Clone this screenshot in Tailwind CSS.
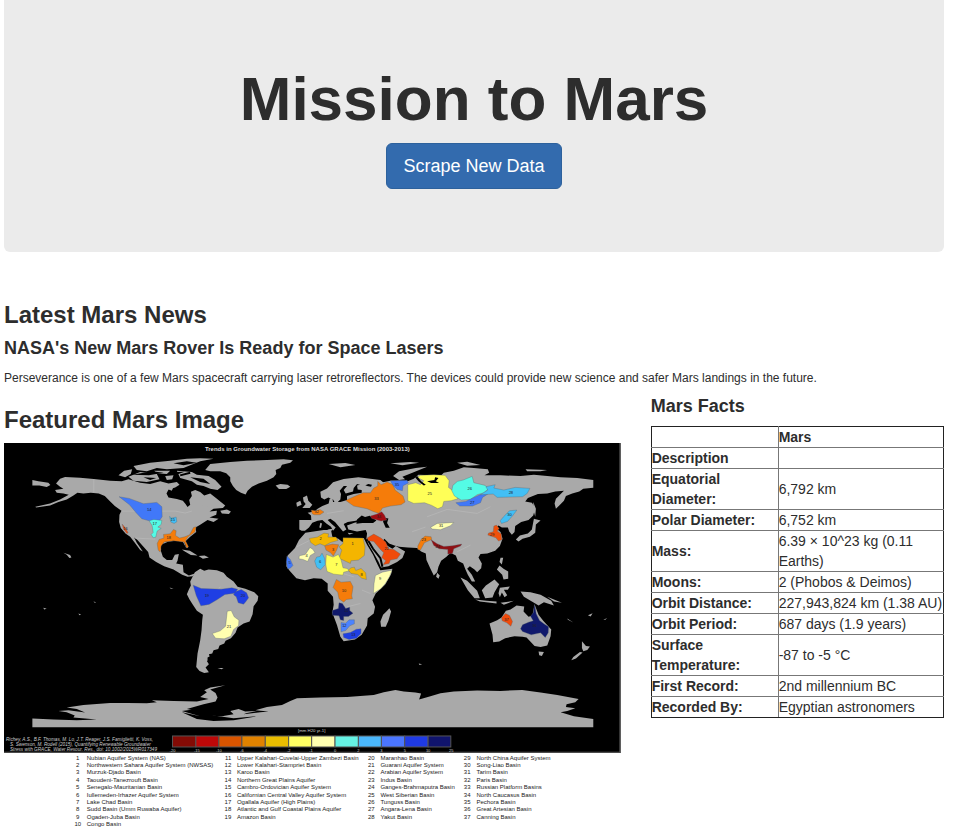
<!DOCTYPE html>
<html lang="en">
<head>
<meta charset="utf-8">
<meta name="viewport" content="width=device-width, initial-scale=1">
<title>Mission to Mars</title>
<script src="https://cdn.jsdelivr.net/npm/@tailwindcss/browser@4"></script>
</head>
<body class="bg-white overflow-x-hidden font-['Liberation_Sans',Arial,sans-serif] text-sm leading-5 text-[#2d2d2d]">
<div class="pl-1 pr-[18px]">
  <header class="flex flex-col items-center gap-2 rounded-b-md bg-[#ebebeb] py-[63px]">
    <h1 class="text-[62px] leading-[72px] text-center font-bold">Mission to Mars</h1>
    <button type="button" class="rounded-md border border-[#2d619c] bg-[#336bae] px-4 py-[10px] text-lg leading-6 text-white">Scrape New Data</button>
  </header>

  <section class="mt-[49px]">
    <h2 class="text-2xl leading-7 font-bold">Latest Mars News</h2>
    <h3 class="mt-[9px] text-lg leading-5 font-bold">NASA's New Mars Rover Is Ready for Space Lasers</h3>
    <p class="mt-[10px] text-xs leading-5">Perseverance is one of a few Mars spacecraft carrying laser retroreflectors. The devices could provide new science and safer Mars landings in the future.</p>
  </section>

  <div class="-mx-[15px] flex">
    <section class="w-2/3 px-[15px] pt-[18px]">
      <h2 class="mb-[9px] text-2xl leading-7 font-bold">Featured Mars Image</h2>
      <svg class="block w-full h-auto" viewBox="12 9 1848 1170" role="img" aria-label="Trends in Groundwater Storage world map" font-family="Liberation Sans, Arial, sans-serif">
        <rect x="12" y="9" width="1848" height="929" fill="#000"/>
        <path d="M1858 9V936H12" fill="none" stroke="#666" stroke-width="3"/>
        <g fill="#a9a9a9">
          <!-- North America -->
          <path d="M97 120L115 124 145 128 151 135 140 141 118 136 97 136Z"/>
          <path d="M165 150L190 146 180 140 168 130 180 116 195 111 240 113 281 117 330 122 365 124 385 118 420 128 450 132 480 124 505 130 530 126 538 134 525 142 505 148 499 160 505 172 530 177 548 182 556 192 562 201 570 194 567 180 575 168 572 155 585 150 600 156 612 166 630 160 650 176 675 196 668 204 640 206 628 214 650 212 648 224 628 232 655 236 640 246 622 240 600 254 586 262 588 276 570 290 555 304 564 322 558 324 548 305 530 302 505 304 488 312 482 332 488 350 500 360 516 360 524 344 536 342 532 362 528 370 548 374 550 396 566 406 584 400 578 408 562 410 546 404 520 388 492 378 468 366 448 352 444 336 428 318 412 300 402 292 410 308 428 334 420 330 404 308 390 290 376 280 362 264 357 246 358 224 364 212 344 198 328 182 314 168 296 160 272 158 250 160 232 158 220 166 200 178 175 186 150 196 108 202 106 200 150 190 180 178 206 164 190 160 170 158Z"/>
          <path d="M600 190L615 186 630 198 615 200ZM660 212L680 208 692 214 686 222 665 220Z"/>
          <!-- Arctic islands and Greenland -->
          <path d="M355 106L372 92 396 88 392 102 375 112ZM385 110L420 96 470 102 478 118 440 126 400 122ZM400 78L450 68 510 62 560 56 600 55 640 56 600 64 570 76 550 84 500 88 470 84 440 94 410 90ZM462 92L510 92 500 102 470 100ZM530 92L575 96 590 104 625 108 645 120 664 140 652 150 630 146 610 138 590 134 575 124 540 114ZM495 108L520 106 516 118 500 120ZM500 146L520 140 515 152Z"/>
          <path d="M630 72L690 66 740 62 800 60 850 58 878 61 870 68 845 74 840 84 826 90 828 102 820 112 800 122 775 130 755 140 742 152 736 163 722 158 708 150 698 138 690 124 690 112 678 100 660 94 630 94 615 90Z"/>
          <path d="M826 136L840 132 862 134 870 140 858 147 836 147ZM545 328L569 332 592 346 572 345 554 334ZM595 348L613 346 626 352 608 356ZM190 338L210 345 214 352 208 354 200 344ZM652 683L670 683 664 687ZM508 442L520 446 512 446Z"/>
          <!-- South America -->
          <path d="M584 396L600 386 612 392 625 388 650 390 670 398 680 410 700 424 712 440 735 446 762 456 774 468 772 482 760 498 757 522 748 544 730 550 712 562 706 578 692 594 676 602 672 610 658 616 654 626 640 630 636 640 626 642 630 654 620 662 626 672 616 682 626 696 612 698 598 692 588 680 590 660 592 640 596 620 600 600 604 570 606 540 608 524 590 512 578 494 568 478 560 462 566 448 572 436 570 424Z"/>
          <!-- Europe and Asia -->
          <path d="M897 268V240L933 240 932 226 922 218 942 214 952 206 966 198 985 190 988 176 996 172 998 186 1020 186 1040 180 1040 168 1060 162 1084 158 1084 150 1072 148 1070 136 1088 132 1100 138 1112 140 1116 130 1140 128 1170 122 1200 122 1222 124 1240 116 1254 104 1290 106 1320 108 1330 98 1360 92 1390 82 1420 84 1462 88 1466 98 1452 106 1500 106 1560 108 1600 104 1640 108 1680 112 1730 114 1778 120V143L1748 146 1736 154 1715 160 1696 168 1690 182 1676 196 1666 206 1662 190 1666 176 1678 164 1690 152 1664 154 1640 160 1612 162 1582 174 1574 184 1594 188 1604 204 1598 226 1584 240 1562 246 1544 258 1542 276 1534 284 1526 274 1522 262 1504 262 1494 256 1486 264 1500 276 1506 296 1498 318 1484 332 1460 340 1440 342 1434 352 1444 370 1442 384 1430 396 1422 388 1408 378 1400 386 1414 404 1424 424 1414 424 1402 404 1394 386 1388 370 1372 362 1366 346 1350 338 1338 350 1322 362 1314 380 1310 396 1300 406 1290 386 1278 360 1276 340 1262 334 1250 324 1222 322 1196 320 1182 316 1166 310 1152 296 1148 302 1162 318 1176 326 1186 318 1214 334 1206 354 1190 366 1164 378 1142 382 1134 364 1118 336 1104 312 1098 296 1100 280 1096 270 1070 274 1044 268 1040 256 1062 248 1078 244 1090 246 1082 236 1066 242 1042 246 1030 252 1038 268 1028 274 1016 260 1004 246 990 236 982 240 994 252 1006 262 998 272 992 260 978 250 966 240 952 242 936 248 926 262 914 272 904 272Z"/>
          <path d="M960 155L980 145 998 127 1030 117 1074 112 1110 116 1140 120 1150 128 1124 136 1104 132 1090 138 1070 132 1060 144 1058 154 1036 160 1030 150 1040 138 1030 138 1018 152 1022 162 1020 178 1006 192 998 178 984 172 972 178 962 172ZM908 172L920 166 924 182 936 194 928 204 906 204 916 192 910 184ZM888 188L900 182 904 194 890 200ZM1178 108L1196 94 1246 84 1280 80 1236 98 1206 110 1214 118 1196 120ZM985 72L1035 69 1065 75 1020 82ZM1170 70L1230 66 1256 68 1206 76ZM1370 68L1400 65 1440 75 1400 77ZM1575 88L1640 90 1620 94 1580 94ZM980 268L998 266 994 272ZM960 248L965 250 962 264 957 262ZM1042 278L1060 280 1046 283Z"/>
          <path d="M1600 236L1620 241 1606 253 1604 278 1588 290 1566 296 1554 304 1546 298 1558 286 1582 280 1594 268ZM1598 186L1606 206 1604 230 1598 208ZM1500 353L1508 353 1504 373 1497 366ZM1497 376L1509 386 1523 394V416L1509 418 1505 404 1489 388ZM1310 398L1318 406 1314 416 1307 410ZM1380 412L1400 422 1430 452 1438 474 1422 474 1402 450ZM1424 478L1458 482 1488 484V490L1438 484ZM1444 450L1456 436 1482 418 1496 432 1482 456 1476 472 1454 474ZM1498 443L1528 439 1522 449 1510 449 1520 465 1512 471 1504 457 1498 471 1494 459ZM1560 454L1590 456 1620 464 1652 482 1660 496 1630 486 1614 496 1594 484 1570 470ZM1500 488L1540 482 1510 494Z"/>
          <!-- Africa -->
          <path d="M915 278L940 274 970 270 992 270 996 290 1014 296 1026 306 1036 294 1064 298 1090 294 1100 314 1118 344 1130 370 1140 390 1176 386 1172 402 1154 434 1126 460 1116 480 1124 500 1120 520 1102 534 1100 556 1084 584 1064 598 1030 603 1020 590 1010 555 996 518 1000 494 998 470 982 452 982 430 964 416 940 414 914 420 888 414 868 392 858 378 862 346 884 324 896 300Z"/>
          <path d="M1167 504L1172 514 1164 542 1156 560 1142 560 1140 544 1148 524 1158 514Z"/>
          <!-- Australia and New Zealand -->
          <path d="M1467 550L1490 540 1503 532 1516 512 1530 508 1548 496 1571 499 1569 514 1584 530 1596 526 1602 493 1614 524 1628 542 1652 568 1650 588 1640 616 1620 620 1602 617 1578 592 1566 590 1542 588 1514 594 1496 604 1478 606 1476 584ZM1614 634L1630 635 1624 647 1616 645ZM1744 603L1756 617 1768 619 1760 629 1748 633 1744 623ZM1738 635L1746 637 1726 655 1712 660 1718 650ZM1640 470L1684 488 1660 484ZM1762 525L1776 519 1770 529ZM1700 535L1718 547 1702 539Z"/>
          <!-- Antarctica -->
          <path d="M97 835L160 838 230 840 290 838 220 832 224 826 200 816 175 812 205 810 255 817 230 806 200 802 250 794 330 788 380 788 440 789 470 786 455 780 520 782 590 784 625 776 600 770 620 756 612 750 630 742 675 735 630 748 646 758 652 772 646 784 610 792 560 806 590 812 620 826 665 828 700 822 690 812 715 806 735 814 770 812 740 818 730 822 780 816 805 814 765 810 800 800 845 794 870 782 890 774 960 772 1040 770 1100 766 1120 764 1150 756 1185 749 1210 754 1245 757 1262 760 1256 778 1290 768 1320 759 1360 754 1430 751 1500 752 1565 749 1620 757 1670 764 1734 776 1724 786 1698 792 1696 800 1724 804 1700 812 1680 816 1720 828 1778 836V861H97Z"/>
          <path d="M130 503L140 506 132 508ZM235 520L243 523 238 525ZM280 484L288 486 284 488ZM1808 538L1820 534 1814 539ZM1255 670L1265 672 1257 674Z"/>
        </g>
        <!-- seas, lakes and channels -->
        <path d="M1070 238L1084 226 1094 231 1108 227 1128 241 1118 249 1086 249 1068 251ZM1150 233L1164 235 1160 249 1168 263 1156 263 1148 245ZM396 104L456 94 490 98 446 106ZM520 70L560 64 590 68 550 76ZM430 112L468 114 450 120ZM505 97L553 95 535 102ZM570 112L610 116 630 132 600 126ZM545 812L590 806 640 826 700 834 770 828 700 840 640 842 590 836 545 816 600 828ZM622 652L634 646V660L622 660ZM560 330L550 300 520 302 490 305 486 334 480 320 484 300 510 296 540 298 556 308Z" fill="#000"/>
        <path d="M540 106l30 -8M610 818l-30 -4M1100 296L1118 326 1140 354 1146 380" fill="none" stroke="#000" stroke-width="6"/>
        <!-- faint borders -->
        <path d="M281 118v38M365 213h160l30 6 20-6M405 294l60 3M1280 230l60-22 90 12 40-20M1370 335l40-20M1235 275l40-14M930 300l-40 20M1010 395l50 15M1040 500l40-10M1085 450l25 10M660 440l-40 60M980 220l50-8" fill="none" stroke="#b9b9b9" stroke-width="2"/>
        <!-- aquifers -->
        <g stroke="#55606a" stroke-width="1">
          <path fill="#4178f8" d="M357 170L387 175 430 191 470 187 485 200 486 230 478 241 450 243 425 236 408 218 388 194Z"/>
          <path fill="#54fbe5" d="M447 242L461 238 485 241 483 253 473 261 483 265 471 273 467 291 459 293 453 283 459 277 456 257Z"/>
          <path fill="#42bff5" d="M508 229L514 234 528 231 530 245 522 250 512 246Z"/>
          <path fill="#ef5317" d="M366 252L376 264 384 278 380 280 370 266Z"/>
          <path fill="#f57c0a" d="M490 283L510 281 520 268 528 272 526 286 538 294 554 290 568 284 580 262 588 260 584 276 564 290 556 302 565 320 560 324 552 306 520 302 492 306 483 318 480 336 474 330 471 310 477 298 491 294Z"/>
          <path fill="#1f3fe4" d="M579 435L603 445 663 447 695 443 712 447 704 459 674 463 650 479 626 493 602 497 588 466Z"/>
          <path fill="#1f3fe4" d="M705 455L723 448 739 458 745 473 737 484 730 492 714 488 708 470 700 464Z"/>
          <path fill="#ffffb0" d="M681 513L693 511 702 530 716 540 715 556 700 568 692 588 672 596 646 594 636 580 660 572 676 558Z"/>
          <path fill="#f4b500" d="M927 295L951 291 971 279 985 281 983 291 1007 291 1013 301 991 307 973 317 959 311 945 317 931 307Z"/>
          <path fill="#f4b500" d="M1028 293L1088 294 1094 320 1092 346 1074 360 1052 362 1050 370 1024 358 1016 356 1024 330 1016 320 1028 310Z"/>
          <path fill="#f57c0a" d="M973 317L997 312 1015 314 1009 330 999 348 991 338 977 330Z"/>
          <path fill="#ffffb0" d="M897 347L915 343 929 322 938 328 944 338 930 346 922 364 908 358 896 356Z"/>
          <path fill="#4178f8" d="M860 348L870 358 878 376 870 384 862 386 858 366Z"/>
          <path fill="#42bff5" d="M949 351L959 349 965 339 973 355 975 373 961 389 949 381 943 363Z"/>
          <path fill="#ffff57" d="M978 343L998 351 1014 343 1022 359 1028 383 1040 385 1048 392 1030 396 1028 405 1000 402 980 394 976 372Z"/>
          <path fill="#f4b500" d="M1052 383L1062 381 1066 391 1082 385 1096 398 1098 418 1084 414 1072 403 1052 400 1044 390Z"/>
          <path fill="#ffffb0" d="M1175 390L1167 410 1155 430 1141 446 1119 460 1121 430 1125 406 1146 396Z"/>
          <path fill="#f57c0a" d="M1008 418L1022 426 1050 424 1058 440 1054 466 1056 476 1038 478 1030 486 1016 476 1012 456 998 442Z"/>
          <path fill="#10196c" d="M1016 488L1026 490 1036 505 1048 501V511L1058 519 1044 529H1030V541L1020 539 1016 527 996 525V511L1014 505Z"/>
          <path fill="#4b83ff" d="M1022 547L1036 549 1046 539 1062 539V551L1048 557 1036 571 1022 575Z"/>
          <path fill="#1f3fe4" d="M1028 581L1050 577 1068 567 1082 566V580L1068 594 1046 598 1030 592Z"/>
          <path fill="#f57c0a" d="M933 210L945 212 959 208 971 216 959 224 941 224 935 220Z"/>
          <path fill="#f57c0a" d="M1036 181L1060 170 1088 158 1110 158 1120 144 1132 138 1132 124 1142 134 1160 126 1178 134 1184 150 1208 168 1214 186 1202 194 1170 198 1146 204 1136 220 1118 214 1100 206 1060 198Z"/>
          <path fill="#a20c12" d="M1110 228L1130 222 1144 215 1152 225 1159 240 1142 243 1114 235Z"/>
          <path fill="#4178f8" d="M1170 122L1220 121 1224 129 1208 137 1206 152 1190 148 1178 136Z"/>
          <path fill="#ffff57" d="M1222 134L1246 128 1260 134 1270 122 1250 112 1260 106 1300 104 1334 106 1346 122 1344 142 1362 156 1372 176 1352 182 1330 184 1326 200 1312 206 1294 196 1272 188 1240 190 1222 182Z"/>
          <path fill="#54fbe5" d="M1357 136L1371 124 1388 120 1415 109 1420 128 1454 136 1464 146 1450 158 1430 164 1410 178 1382 180 1362 168 1354 152Z"/>
          <path fill="#4178f8" d="M1366 188L1396 184 1412 176 1438 164 1462 162 1446 172 1440 188 1416 198 1378 198Z"/>
          <path fill="#42bff5" d="M1456 140L1484 134 1480 144 1510 150 1544 142 1588 145 1580 160 1566 170 1490 172 1478 162 1440 164 1462 150Z"/>
          <path fill="#42bff5" d="M1499 242L1509 230 1527 212 1549 210 1537 226 1521 244 1503 250Z"/>
          <path fill="#ffffb0" d="M1290 262L1310 250 1360 247 1350 257 1320 269 1296 267Z"/>
          <path fill="#f0500b" d="M1480 258L1488 255 1496 265 1490 273 1502 281 1504 299 1494 303 1486 293 1462 285 1464 279 1478 275Z"/>
          <path fill="#f57c0a" d="M1252 318L1262 298 1274 288 1292 290 1294 298 1272 308 1260 330 1252 328Z"/>
          <path fill="#8f0f13" d="M1292 299L1310 311 1330 319 1356 317 1384 312 1380 318 1360 326 1356 340 1342 342V328L1316 326 1300 316Z"/>
          <path fill="#f04b0b" d="M1100 294L1120 282 1142 294 1156 306 1164 326 1180 328 1200 342 1190 356 1170 360 1166 370 1148 374 1156 362 1144 352 1150 338 1140 328 1120 304 1104 302Z"/>
          <path fill="#f04b0b" d="M1503 533L1515 520 1527 526 1536 544 1531 558 1519 548 1505 542Z"/>
          <path fill="#10196c" d="M1602 493L1607 521 1617 541 1632 552 1644 560 1643 578 1634 592 1620 578 1592 584 1566 574 1560 566 1566 554 1584 546 1598 542 1590 528 1598 518Z"/>
        </g>
        <path d="M1250 108L1262 124 1276 134 1270 136 1254 124 1244 112ZM1280 124L1302 120 1304 112 1314 114 1306 124 1316 129 1292 129Z" fill="#000"/>
        <g font-size="12" fill="#222" text-anchor="middle">
          <text x="447" y="212">14</text><text x="464" y="254">17</text><text x="518" y="243">15</text><text x="506" y="298">18</text><text x="376" y="270">16</text>
          <text x="620" y="471">19</text><text x="728" y="471">20</text><text x="686" y="563">21</text><text x="961" y="299">2</text><text x="1057" y="315">1</text><text x="998" y="333">3</text>
          <text x="919" y="352">4</text><text x="868" y="372">5</text><text x="959" y="370">6</text><text x="1008" y="378">7</text><text x="1084" y="407">8</text><text x="1139" y="421">9</text>
          <text x="1031" y="455">10</text><text x="1038" y="516">11</text><text x="1032" y="560">12</text><text x="1059" y="588">13</text><text x="949" y="219">32</text><text x="1128" y="181">33</text>
          <text x="1136" y="234">34</text><text x="1190" y="138">35</text><text x="1288" y="166">25</text><text x="1408" y="151">26</text><text x="1415" y="192">27</text><text x="1531" y="163">28</text>
          <text x="1527" y="229">30</text><text x="1322" y="262">31</text><text x="1475" y="289">29</text><text x="1270" y="303">23</text><text x="1312" y="323">24</text><text x="1159" y="330">22</text>
          <text x="1518" y="542">37</text><text x="1602" y="560">36</text>
        </g>
        <text x="921" y="33" font-size="18" font-weight="bold" fill="#ddd" text-anchor="middle">Trends in Groundwater Storage from NASA GRACE Mission (2003-2013)</text>
        <g font-size="14" font-style="italic" fill="#ccc">
          <text x="18" y="901">Richey, A.S., B.F. Thomas, M. Lo, J.T. Reager, J.S. Famiglietti, K. Voss,</text>
          <text x="30" y="916">S. Swenson, M. Rodell (2015), Quantifying Renewable Groundwater</text>
          <text x="30" y="931">Stress with GRACE, Water Resour. Res., doi: 10.1002/2015WR017349</text>
        </g>
        <!-- colour scale -->
        <text x="934" y="876" font-size="13" fill="#ccc" text-anchor="middle">[mm H20 yr-1]</text>
        <g stroke="#555" stroke-width="3">
          <rect x="517" y="887" width="70" height="33" fill="#830b05"/><rect x="587" y="887" width="69" height="33" fill="#bd0808"/>
          <rect x="656" y="887" width="69" height="33" fill="#d95500"/><rect x="725" y="887" width="70" height="33" fill="#e08200"/>
          <rect x="795" y="887" width="70" height="33" fill="#e9bd00"/><rect x="865" y="887" width="69" height="33" fill="#ffff62"/>
          <rect x="934" y="887" width="70" height="33" fill="#ffffb0"/><rect x="1004" y="887" width="70" height="33" fill="#65f2e4"/>
          <rect x="1074" y="887" width="69" height="33" fill="#4ab7fb"/><rect x="1143" y="887" width="70" height="33" fill="#4b76ff"/>
          <rect x="1213" y="887" width="70" height="33" fill="#1f3ae4"/><rect x="1283" y="887" width="68" height="33" fill="#10146c"/>
        </g>
        <g font-size="12" fill="#ccc" text-anchor="middle">
          <text x="517" y="934">-20</text><text x="590" y="934">-15</text><text x="656" y="934">-10</text><text x="725" y="934">-6</text><text x="795" y="934">-4</text><text x="865" y="934">-2</text><text x="932" y="934">-1</text><text x="1004" y="934">0</text><text x="1074" y="934">2</text><text x="1143" y="934">3</text><text x="1213" y="934">5</text><text x="1283" y="934">10</text><text x="1352" y="934">25</text>
        </g>
        <!-- basin legend -->
        <g font-size="18" fill="#222">
          <g text-anchor="end">
            <text x="238" y="958">1</text><text x="238" y="980">2</text><text x="238" y="1002">3</text><text x="238" y="1024">4</text><text x="238" y="1046">5</text><text x="238" y="1069">6</text><text x="238" y="1091">7</text><text x="238" y="1113">8</text><text x="238" y="1135">9</text><text x="243" y="1158">10</text>
            <text x="693" y="958">11</text><text x="693" y="980">12</text><text x="693" y="1002">13</text><text x="693" y="1024">14</text><text x="693" y="1046">15</text><text x="693" y="1069">16</text><text x="693" y="1091">17</text><text x="693" y="1113">18</text><text x="693" y="1135">19</text>
            <text x="1123" y="958">20</text><text x="1123" y="980">21</text><text x="1123" y="1002">22</text><text x="1123" y="1024">23</text><text x="1123" y="1046">24</text><text x="1123" y="1069">25</text><text x="1123" y="1091">26</text><text x="1123" y="1113">27</text><text x="1123" y="1135">28</text>
            <text x="1410" y="958">29</text><text x="1410" y="980">30</text><text x="1410" y="1002">31</text><text x="1410" y="1024">32</text><text x="1410" y="1046">33</text><text x="1410" y="1069">34</text><text x="1410" y="1091">35</text><text x="1410" y="1113">36</text><text x="1410" y="1135">37</text>
          </g>
          <text x="260" y="958">Nubian Aquifer System (NAS)</text><text x="260" y="980">Northwestern Sahara Aquifer System (NWSAS)</text><text x="260" y="1002">Murzuk-Djado Basin</text><text x="260" y="1024">Taoudeni-Tanezrouft Basin</text><text x="260" y="1046">Senegalo-Mauritanian Basin</text><text x="260" y="1069">Iullemeden-Irhazer Aquifer System</text><text x="260" y="1091">Lake Chad Basin</text><text x="260" y="1113">Sudd Basin (Umm Ruwaba Aquifer)</text><text x="260" y="1135">Ogaden-Juba Basin</text><text x="260" y="1158">Congo Basin</text>
          <text x="710" y="958">Upper Kalahari-Cuvelai-Upper Zambezi Basin</text><text x="710" y="980">Lower Kalahari-Stampriet Basin</text><text x="710" y="1002">Karoo Basin</text><text x="710" y="1024">Northern Great Plains Aquifer</text><text x="710" y="1046">Cambro-Ordovician Aquifer System</text><text x="710" y="1069">Californian Central Valley Aquifer System</text><text x="710" y="1091">Ogallala Aquifer (High Plains)</text><text x="710" y="1113">Atlantic and Gulf Coastal Plains Aquifer</text><text x="710" y="1135">Amazon Basin</text>
          <text x="1140" y="958">Maranhao Basin</text><text x="1140" y="980">Guarani Aquifer System</text><text x="1140" y="1002">Arabian Aquifer System</text><text x="1140" y="1024">Indus Basin</text><text x="1140" y="1046">Ganges-Brahmaputra Basin</text><text x="1140" y="1069">West Siberian Basin</text><text x="1140" y="1091">Tunguss Basin</text><text x="1140" y="1113">Angara-Lena Basin</text><text x="1140" y="1135">Yakut Basin</text>
          <text x="1428" y="958">North China Aquifer System</text><text x="1428" y="980">Song-Liao Basin</text><text x="1428" y="1002">Tarim Basin</text><text x="1428" y="1024">Paris Basin</text><text x="1428" y="1046">Russian Platform Basins</text><text x="1428" y="1069">North Caucasus Basin</text><text x="1428" y="1091">Pechora Basin</text><text x="1428" y="1113">Great Artesian Basin</text><text x="1428" y="1135">Canning Basin</text>
        </g>
      </svg>
    </section>

    <section class="w-1/3 px-[15px] pt-2">
      <h3 id="facts" class="mb-[10px] text-lg leading-5 font-bold">Mars Facts</h3>
      <table aria-labelledby="facts" class="w-full border-collapse border border-[#222] text-left [&_td]:border [&_td]:border-[#777] [&_th]:border [&_th]:border-[#777] [&_tr>*:first-child]:border-l-[#222] [&_tr>*:last-child]:border-r-[#222]">
        <thead>
          <tr><th class="w-[127px] border-t-[#222]!"></th><th class="border-t-[#222]!">Mars</th></tr>
          <tr><th>Description</th><th></th></tr>
        </thead>
        <tbody>
          <tr><th>Equatorial Diameter:</th><td>6,792 km</td></tr>
          <tr><th>Polar Diameter:</th><td>6,752 km</td></tr>
          <tr><th>Mass:</th><td>6.39 × 10^23 kg (0.11 Earths)</td></tr>
          <tr><th>Moons:</th><td>2 (Phobos &amp; Deimos)</td></tr>
          <tr><th>Orbit Distance:</th><td>227,943,824 km (1.38 AU)</td></tr>
          <tr><th>Orbit Period:</th><td>687 days (1.9 years)</td></tr>
          <tr><th>Surface Temperature:</th><td>-87 to -5 °C</td></tr>
          <tr><th>First Record:</th><td>2nd millennium BC</td></tr>
          <tr><th class="border-b-[#222]!">Recorded By:</th><td class="border-b-[#222]!">Egyptian astronomers</td></tr>
        </tbody>
      </table>
    </section>
  </div>
</div>
</body>
</html>
